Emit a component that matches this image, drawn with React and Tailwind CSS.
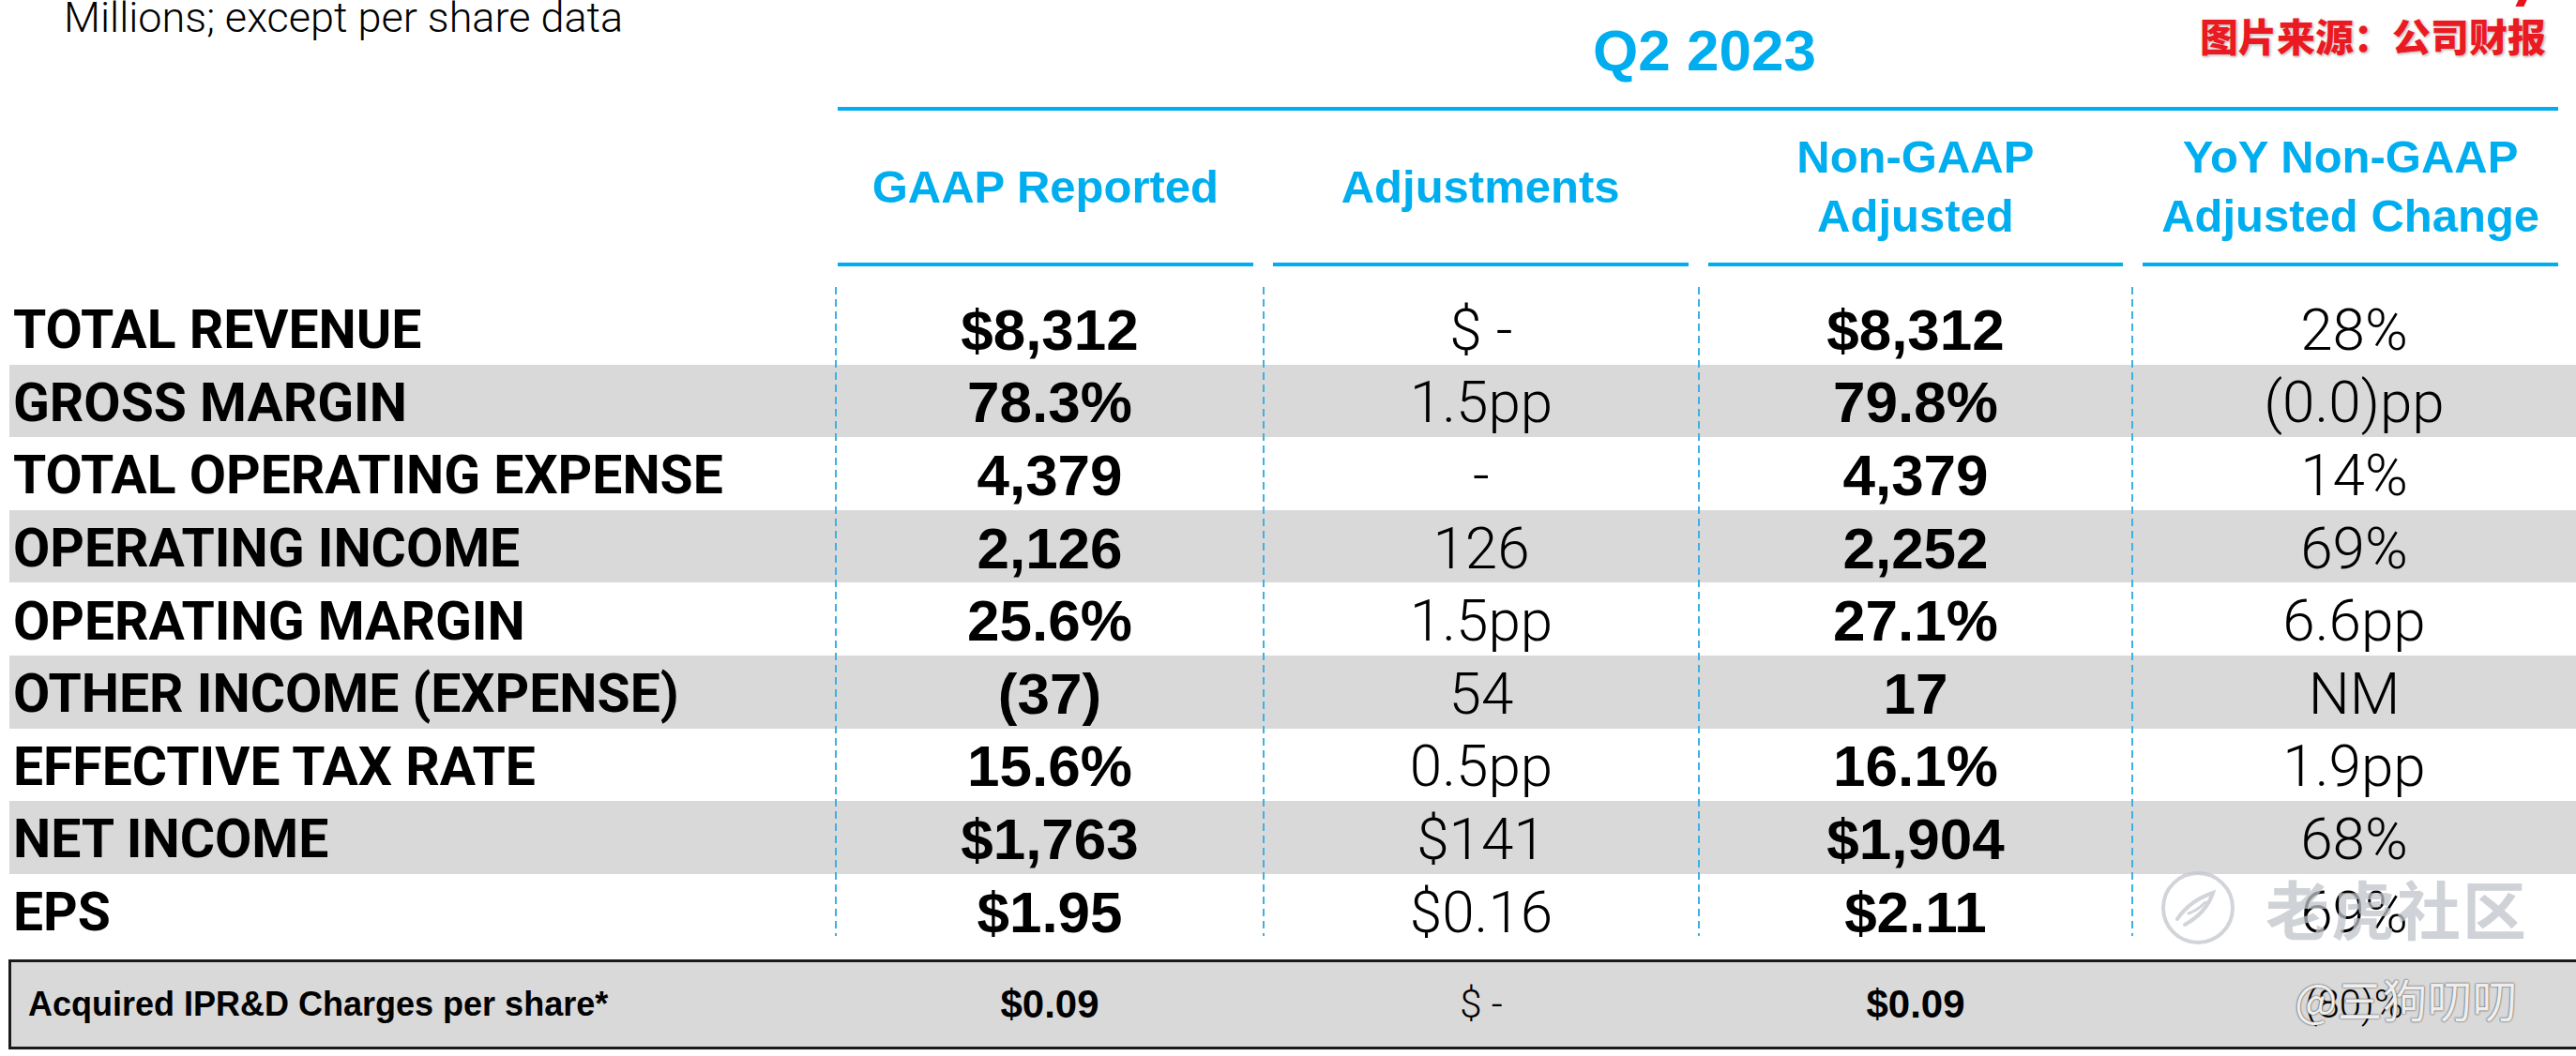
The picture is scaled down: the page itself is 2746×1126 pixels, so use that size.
const labelBold = "font-['Roboto','Liberation_Sans',sans-serif] font-bold";
const sansBold = "font-['Liberation_Sans',Arial,sans-serif] font-bold";
const light = "font-['Roboto','Liberation_Sans',sans-serif] font-light";

const rows = [
  ["TOTAL REVENUE", "$8,312", "$ -", "$8,312", "28%"],
  ["GROSS MARGIN", "78.3%", "1.5pp", "79.8%", "(0.0)pp"],
  ["TOTAL OPERATING EXPENSE", "4,379", "-", "4,379", "14%"],
  ["OPERATING INCOME", "2,126", "126", "2,252", "69%"],
  ["OPERATING MARGIN", "25.6%", "1.5pp", "27.1%", "6.6pp"],
  ["OTHER INCOME (EXPENSE)", "(37)", "54", "17", "NM"],
  ["EFFECTIVE TAX RATE", "15.6%", "0.5pp", "16.1%", "1.9pp"],
  ["NET INCOME", "$1,763", "$141", "$1,904", "68%"],
  ["EPS", "$1.95", "$0.16", "$2.11", "69%"],
];

const headers = [
  ["GAAP Reported"],
  ["Adjustments"],
  ["Non-GAAP", "Adjusted"],
  ["YoY Non-GAAP", "Adjusted Change"],
];

const dashX = ["left-[890px]", "left-[1346px]", "left-[1810px]", "left-[2272px]"];

const App = () => {
  return (
    <div className="relative w-[2746px] h-[1126px] overflow-hidden bg-white text-black">
      {/* top: units + quarter headers */}
      <div className="flex h-[311px]">
        <div className="w-[893px] pl-[68px]">
          <div className={`${light} text-[45px] leading-[38px]`}>
            Millions; except per share data
          </div>
        </div>
        <div className="w-[1834px] flex flex-col">
          <div className="h-[114px] flex items-center justify-center pb-[6px] pl-[14px]">
            <span className={`${sansBold} text-[62px] leading-none text-[#00aeef]`}>Q2 2023</span>
          </div>
          <div className="h-[4px] bg-[#00aeef]" />
          <div className="grid grid-cols-4 gap-x-[21px]">
            {headers.map((h, i) => (
              <div key={i} className="flex flex-col">
                <div className="h-[162px] flex flex-col items-center justify-center">
                  {h.map((line, j) => (
                    <div key={j} className={`${sansBold} text-[49px] leading-[63px] text-[#00aeef]`}>
                      {line}
                    </div>
                  ))}
                </div>
                <div className="h-[4px] bg-[#00aeef]" />
              </div>
            ))}
          </div>
        </div>
      </div>

      {/* body rows */}
      <div className="relative">
        {rows.map((r, i) => (
          <div
            key={i}
            className={`ml-[10px] h-[77.6px] grid grid-cols-[881px_456px_464px_462px_1fr] items-center ${
              i % 2 === 1 ? "bg-[#d9d9d9]" : ""
            }`}
          >
            <div className={`${labelBold} text-[57px] leading-none pl-[4px] pt-[4px] whitespace-nowrap`}>{r[0]}</div>
            <div className={`${sansBold} text-[62px] leading-none text-center pt-[4px]`}>{r[1]}</div>
            <div className={`${light} text-[62px] leading-none text-center pt-[4px]`}>{r[2]}</div>
            <div className={`${sansBold} text-[62px] leading-none text-center pt-[4px]`}>{r[3]}</div>
            <div className={`${light} text-[62px] leading-none text-center pt-[4px]`}>{r[4]}</div>
          </div>
        ))}
        {dashX.map((x) => (
          <div
            key={x}
            className={`absolute ${x} top-[-5px] h-[692px] w-[2px] bg-[repeating-linear-gradient(to_bottom,#3db1e3_0px,#3db1e3_8px,transparent_8px,transparent_13px)]`}
          />
        ))}
      </div>

      {/* acquired IPR&D box */}
      <div className="mt-[14px] ml-[9px] h-[96px] border-[3px] border-r-0 border-[#1a1a1a] bg-[#d9d9d9] grid grid-cols-[879px_456px_464px_462px_1fr] items-center">
        <div className={`${sansBold} text-[36px] leading-none pl-[18px]`}>Acquired IPR&amp;D Charges per share*</div>
        <div className={`${sansBold} text-[42px] leading-none text-center`}>$0.09</div>
        <div className={`${light} text-[42px] leading-none text-center`}>$ -</div>
        <div className={`${sansBold} text-[42px] leading-none text-center`}>$0.09</div>
        <div className={`${light} text-[42px] leading-none text-center`}>(80)%</div>
      </div>

      {/* source note */}
      <div className="absolute top-0 left-[2683px] w-[9px] h-[7px] bg-[#e8141b] -skew-x-[25deg]" />
      <div
        className={`absolute top-[17px] right-[32px] font-['Noto_Sans_CJK_SC',sans-serif] font-black text-[41px] leading-none text-[#ea1a22] [text-shadow:0_0_2px_#fff,1px_1px_3px_#999]`}
      >
        图片来源：公司财报
      </div>

      {/* watermarks */}
      <div className="absolute left-[2303px] top-[928px] flex items-center gap-[32px] opacity-75">
        <svg width="80" height="80" viewBox="0 0 80 80" fill="none">
          <circle cx="40" cy="40" r="37" stroke="#c2c6cc" strokeWidth="4" />
          <path d="M18 52 C26 40, 38 30, 56 24 C52 36, 44 48, 26 58" stroke="#c2c6cc" strokeWidth="4" fill="none" strokeLinecap="round" />
          <path d="M30 46 C36 44, 42 40, 48 34" stroke="#c2c6cc" strokeWidth="3" fill="none" strokeLinecap="round" />
        </svg>
        <span className="font-['Noto_Sans_CJK_SC',sans-serif] font-bold text-[68px] leading-none text-[#bfc3c9] tracking-[2px]">
          老虎社区
        </span>
      </div>
      <div className="absolute left-[2446px] top-[1040px] font-['Noto_Sans_CJK_SC',sans-serif] text-[48px] leading-none text-white/90 [text-shadow:0_0_2px_#555,0_0_1px_#333]">
        @三狗叨叨
      </div>
    </div>
  );
};

export default App;
